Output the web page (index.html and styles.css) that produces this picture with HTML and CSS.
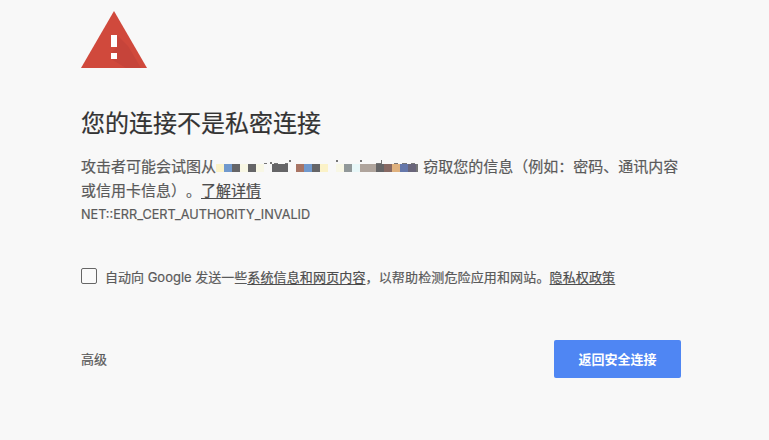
FILE: index.html
```html
<!DOCTYPE html>
<html lang="zh-CN">
<head>
<meta charset="utf-8">
<title>隐私设置错误</title>
<link rel="stylesheet" href="styles.css">
</head>
<body>
<main class="page">
  <svg class="warning" width="66" height="58" viewBox="0 0 66 58" aria-hidden="true">
    <path fill="#d0493c" d="M33 0 66 57H0z"/>
    <path fill="#c6443a" d="M36 24 47 35 60 57H45L30 48 36 48 30 42 36 36z"/>
    <path fill="#fff" d="M30 24h6v12h-6zM30 42h6v6h-6z"/>
  </svg>
  <h1 class="title">您的连接不是私密连接</h1>
  <p class="message">攻击者可能会试图从<svg class="mosaic" width="203" height="24" viewBox="0 0 203 24" shape-rendering="crispEdges" aria-hidden="true">
    <path fill="#fbf2c8" d="M0 9h8v8H0zM104 9h8v8h-8z"/>
    <path fill="#7199cd" d="M8 9h8v8H8zM88 9h8v8h-8z"/>
    <path fill="#656567" d="M16 9h8v8h-8zM32 9h8v8h-8zM56 9h16v8H56zM96 9h8v8h-8zM160 9h8v8h-8z"/>
    <path fill="#f8f7e5" d="M24 9h8v8h-8zM40 9h8v8h-8zM120 9h8v8h-8z"/>
    <path fill="#a87464" d="M80 9h8v8h-8z"/>
    <path fill="#919899" d="M128 9h8v8h-8z"/>
    <path fill="#e8f7f8" d="M136 9h8v8h-8z"/>
    <path fill="#afa49c" d="M144 9h16v8h-16z"/>
    <path fill="#876963" d="M168 9h8v8h-8z"/>
    <path fill="#dfb17e" d="M176 9h8v8h-8z"/>
    <path fill="#6577aa" d="M184 9h8v8h-8z"/>
    <path fill="#69657a" d="M192 9h8v8h-8z"/>
    <path fill="#777" d="M48 8h3v1h-3zM54 7h2v2h-2zM58 8h4v1h-4zM69 8h3v1h-3zM73 5h2v2h-2zM120 5h2v2h-2zM144 5h2v2h-2zM165 5h1v4h-1zM160 8h5v1h-5zM178 8h4v1h-4zM186 8h5v1h-5zM195 8h4v1h-4zM200 9h2v8h-2z"/>
  </svg> 窃取您的信息（例如：密码、通讯内容或信用卡信息）。<a class="link">了解详情</a></p>
  <p class="code">NET::ERR_CERT_AUTHORITY_INVALID</p>
  <label class="report">
    <span class="checkbox"></span>
    <span class="report-text">自动向 Google 发送一些<span class="rest"><a class="link">系统信息和网页内容</a>，以帮助检测危险应用和网站。<a class="link">隐私权政策</a></span></span>
  </label>
  <div class="actions">
    <a class="details">高级</a>
    <button class="primary">返回安全连接</button>
  </div>
</main>
</body>
</html>
```
FILE: styles.css
```css
* {
  box-sizing: border-box;
}

body {
  margin: 0;
  background: #f8f8f8;
  color: #5a5a5a;
  font-family: Inter, "Noto Sans CJK SC", sans-serif;
  text-spacing-trim: space-all;
  -webkit-text-stroke: 0.2px currentColor;
}

.page {
  width: 600px;
  margin-left: 81px;
  padding-top: 11px;
}

.warning {
  display: block;
}

.title {
  margin: 40px 0 0;
  color: #333;
  font-size: 24px;
  font-weight: 400;
  line-height: 29px;
}

.message {
  height: 48px;
  margin: 17px 0 0;
  font-size: 15px;
  line-height: 24px;
}

.mosaic {
  display: inline-block;
  height: 24px;
  vertical-align: -3px;
  margin: -4px 0;
}

.link {
  color: #4d4d4d;
  text-decoration: underline;
  text-decoration-thickness: 1px;
  text-underline-offset: 2px;
}

.code {
  margin: 3px 0 0;
  font-size: 12.7px;
  line-height: 18px;
}

.report {
  display: flex;
  align-items: center;
  gap: 8px;
  height: 20px;
  margin-top: 42px;
  font-size: 13px;
  line-height: 20px;
  white-space: nowrap;
}

.report-text {
  padding-top: 2px;
}

.rest {
  letter-spacing: 0.14px;
}

.checkbox {
  width: 16px;
  height: 16px;
  border: 1px solid #666;
  border-radius: 2px;
  background: #fafafa;
}

.actions {
  display: flex;
  align-items: center;
  justify-content: space-between;
  margin-top: 54px;
  font-size: 13px;
}

.details {
  margin-top: -1px;
}

.primary {
  width: 127px;
  height: 38px;
  padding: 0;
  border: 0;
  border-radius: 2px;
  background: #4f86f3;
  color: #fff;
  font: 700 13px/20px Inter, "Noto Sans CJK SC", sans-serif;
  -webkit-text-stroke: 0;
}
```
